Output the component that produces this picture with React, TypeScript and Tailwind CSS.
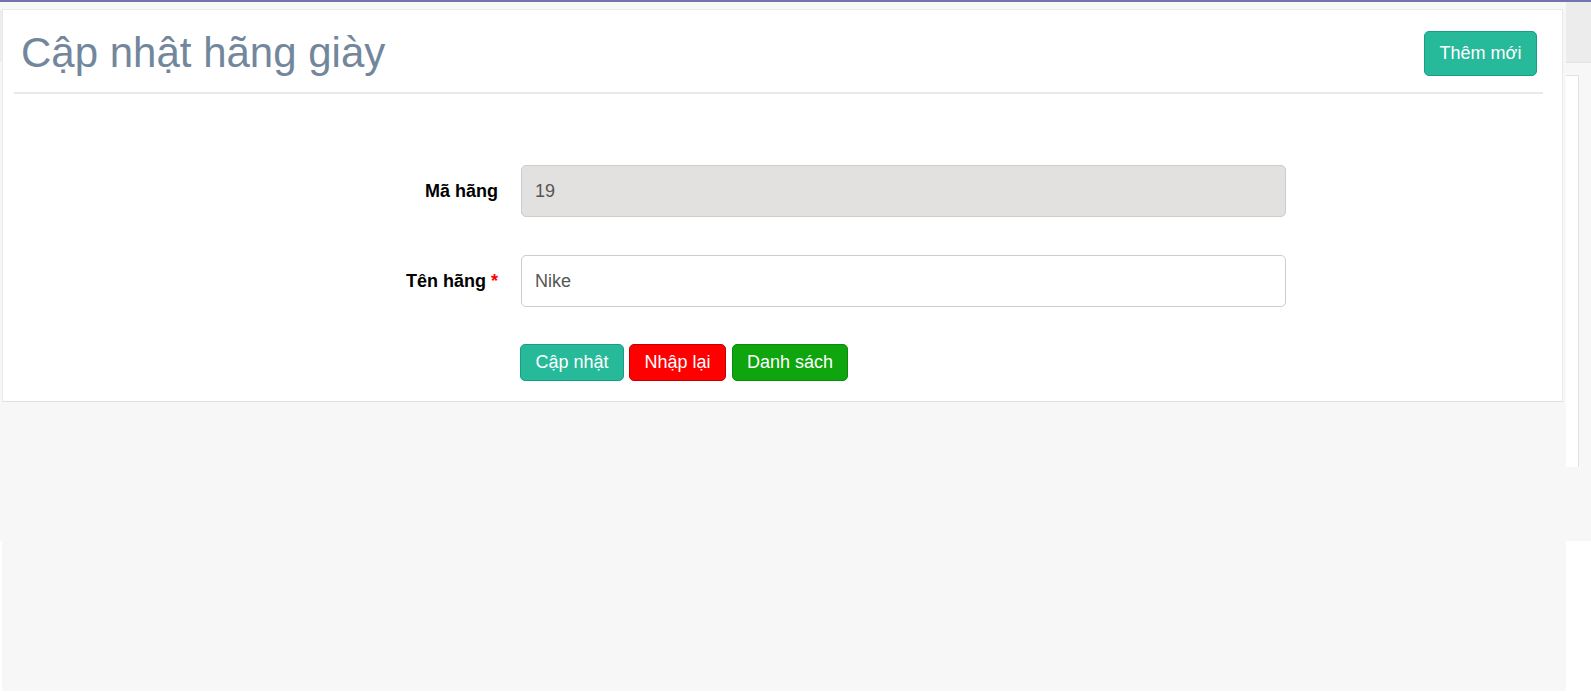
import React from 'react'

const font = { fontFamily: '"Liberation Sans", Arial, sans-serif' }

export default function App() {
  return (
    <div className="h-[693px] w-full overflow-hidden bg-white" style={font}>
      {/* top bar */}
      <div className="h-[2px] bg-[#7573ae]" />

      <div className="flex h-[689px]">
        {/* left strip */}
        <div className="flex w-[2px] flex-col">
          <div className="h-[8px] bg-[#f7f7f7]" />
          <div className="h-[52px] bg-[#ededed]" />
          <div className="h-[479px] bg-[#f7f7f7]" />
          <div className="flex-1 bg-white" />
        </div>

        {/* main */}
        <div className="w-[1564px] bg-[#f7f7f7] pt-[7px]">
          <div className="w-[1561px] border border-[#e6e9ed] border-b-[#e0e0e0] bg-white pb-[20px]">
            {/* header */}
            <div className="ml-[11px] mr-[19px] flex h-[84px] items-center justify-between border-b-2 border-[#e6e9ed] pb-[6px] pl-[7px] pr-[6px] pt-[10px]">
              <h2 className="text-[42px] font-normal leading-none text-[#73879c]">Cập nhật hãng giày</h2>
              <button className="flex h-[45px] w-[113px] items-center justify-center rounded-[5px] border border-[#169f85] bg-[#26b99a] text-[18px] text-white">
                Thêm mới
              </button>
            </div>

            {/* form */}
            <div className="mt-[71px]">
              <div className="flex items-center">
                <label className="w-[495px] text-right text-[18px] font-bold text-black">Mã hãng</label>
                <div className="ml-[23px] flex h-[52px] w-[765px] items-center rounded-[5px] border border-[#cccccc] bg-[#e2e1df] px-[13px] text-[18px] text-[#555555]">
                  19
                </div>
              </div>

              <div className="mt-[38px] flex items-center">
                <label className="w-[495px] text-right text-[18px] font-bold text-black">
                  Tên hãng <span className="text-[#ff0000]">*</span>
                </label>
                <input
                  type="text"
                  defaultValue="Nike"
                  className="ml-[23px] h-[52px] w-[765px] rounded-[5px] border border-[#cccccc] bg-white px-[13px] text-[18px] text-[#555555] outline-none"
                />
              </div>

              <div className="ml-[517px] mt-[37px] flex gap-[5px]">
                <button className="h-[37px] w-[104px] rounded-[5px] border border-[#169f85] bg-[#26b99a] text-[18px] text-white">
                  Cập nhật
                </button>
                <button className="h-[37px] w-[97px] rounded-[5px] border border-[#c40000] bg-[#ff0000] text-[18px] text-white">
                  Nhập lại
                </button>
                <button className="ml-[1px] h-[37px] w-[116px] rounded-[5px] border border-[#0b8a0b] bg-[#0ea50e] text-[18px] text-white">
                  Danh sách
                </button>
              </div>
            </div>
          </div>
        </div>

        {/* right side */}
        <div className="flex flex-1 flex-col">
          <div className="h-[61px] border-b border-[#e2e2e2] bg-[#ececec]" />
          <div className="h-[12px] bg-[#f7f7f7]" />
          <div className="flex h-[392px] bg-[#f7f7f7]">
            <div className="w-[13px] border-r border-t border-[#e2e2e2] bg-white" />
          </div>
          <div className="h-[74px] bg-[#f7f7f7]" />
          <div className="flex-1 bg-white" />
        </div>
      </div>
    </div>
  )
}
